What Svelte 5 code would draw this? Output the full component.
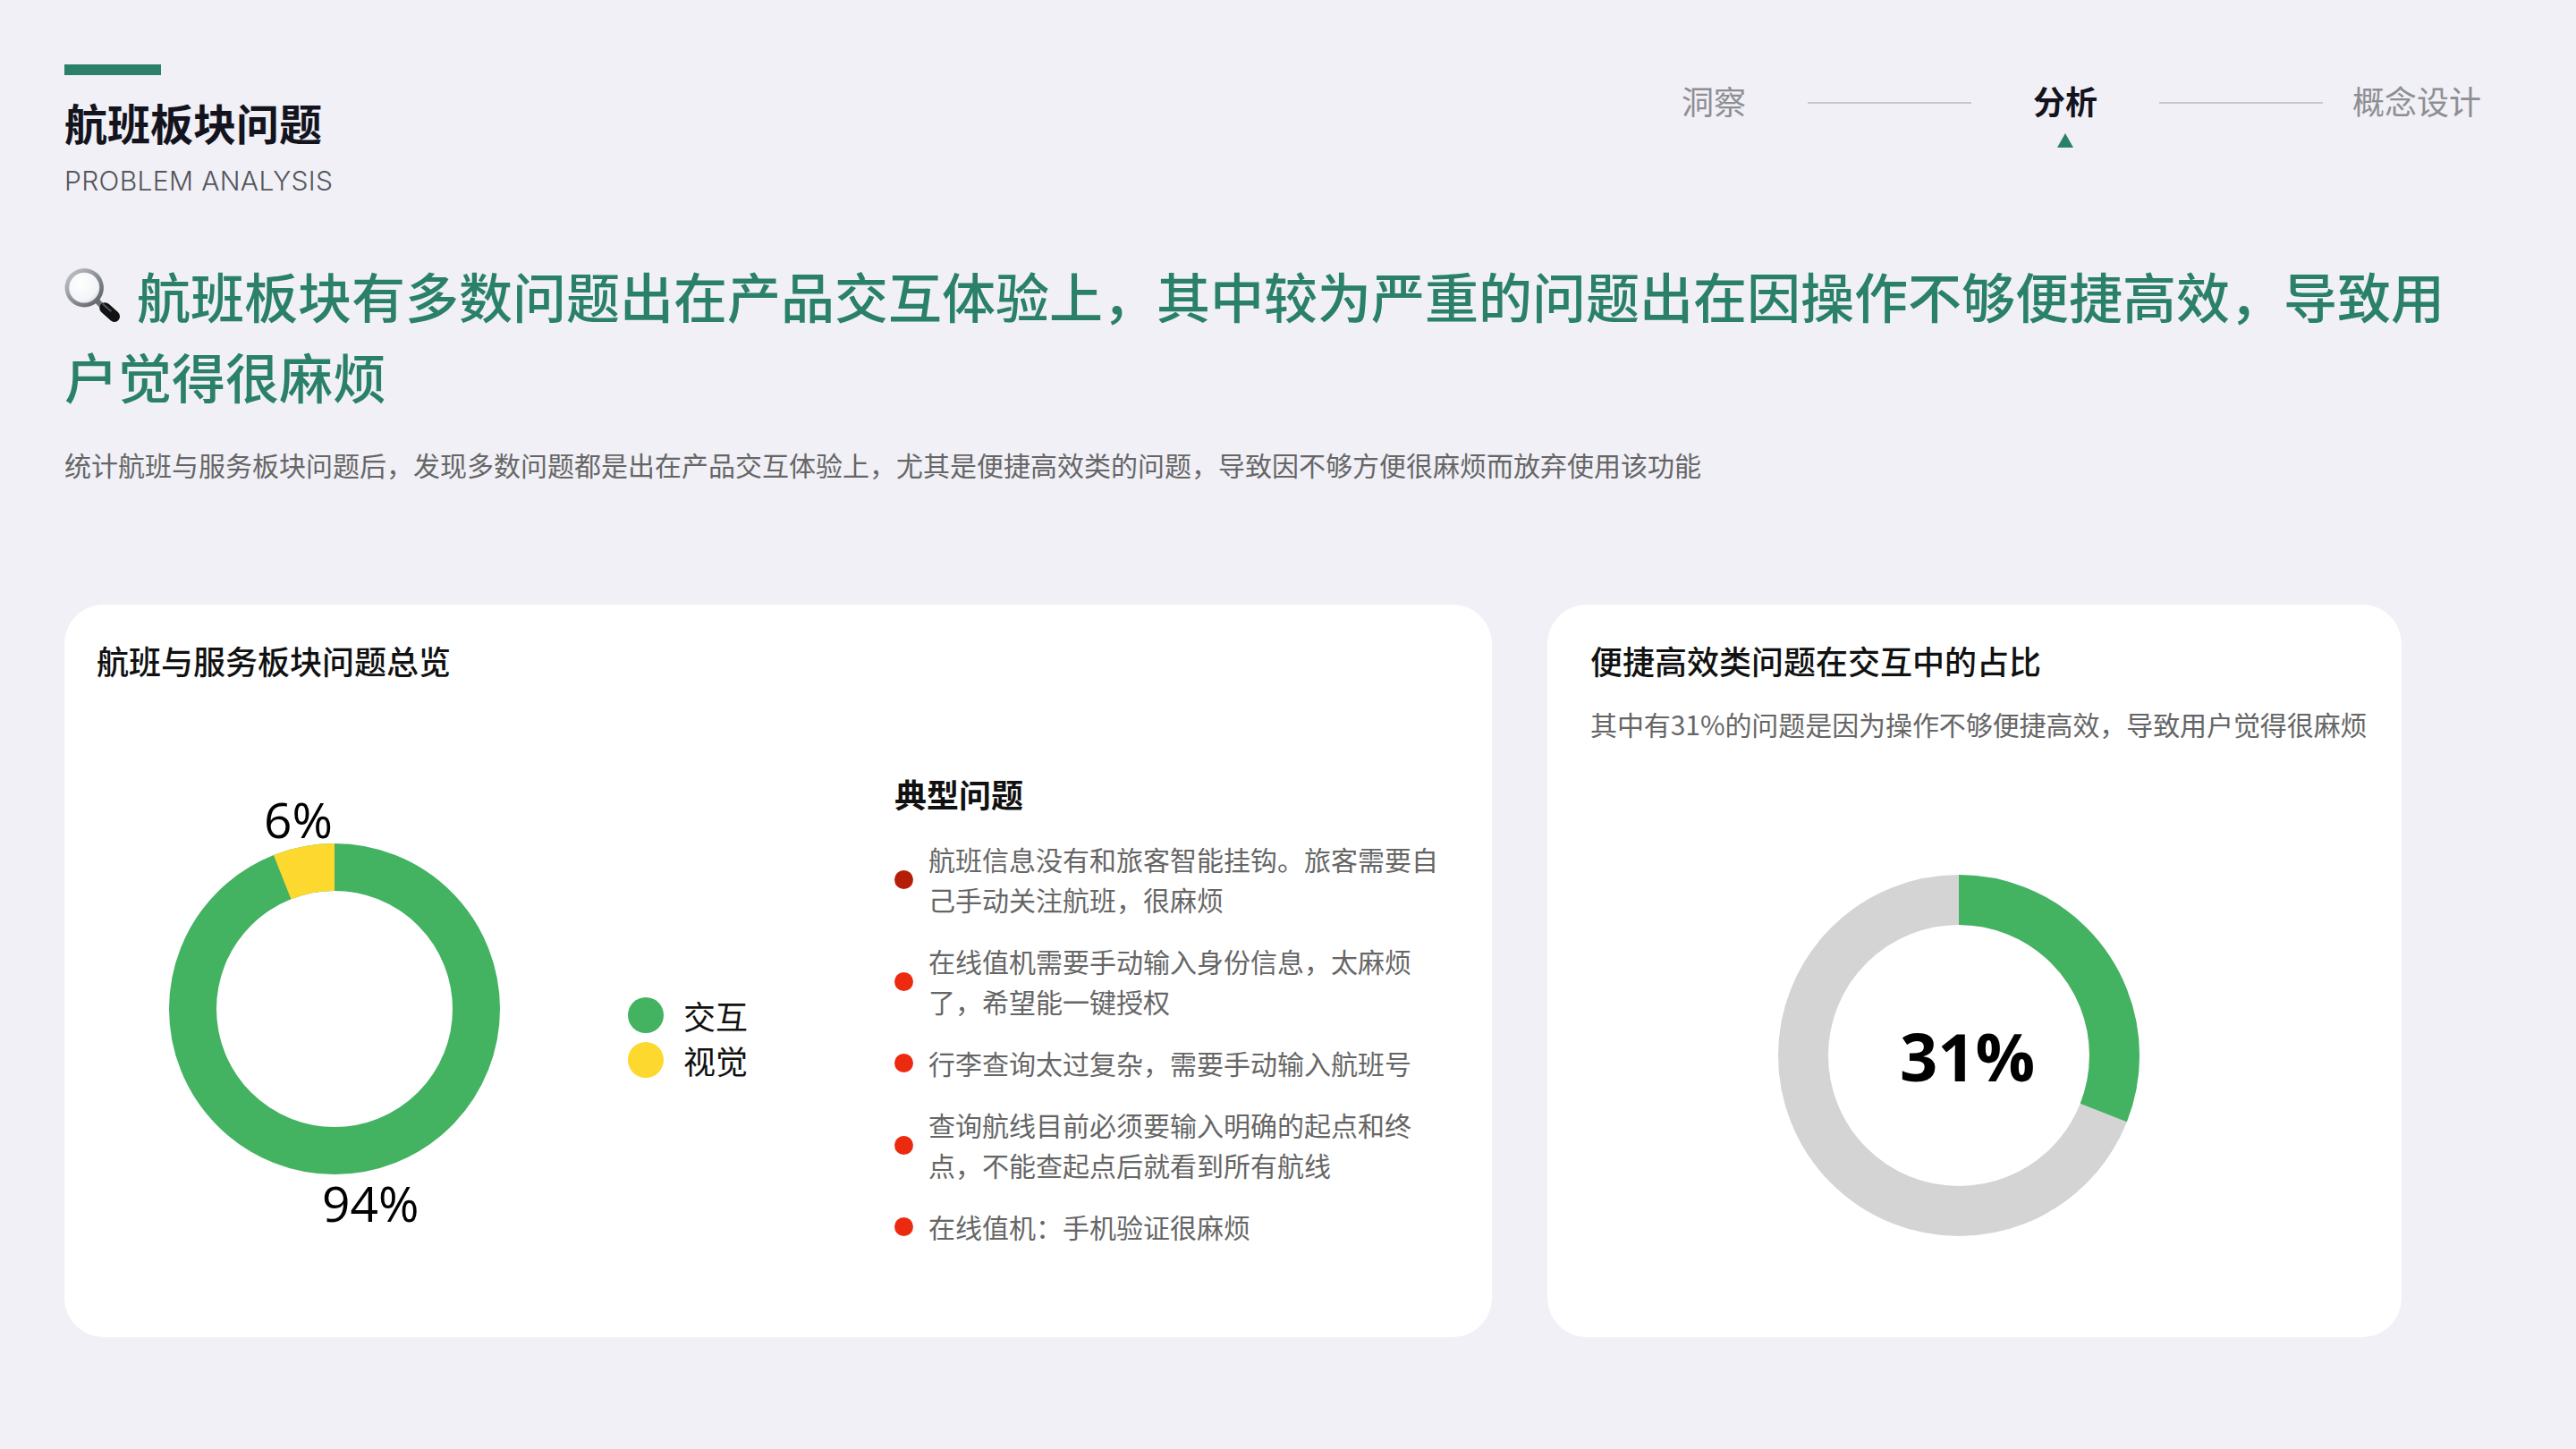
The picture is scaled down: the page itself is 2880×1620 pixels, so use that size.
<script>
  const steps = [
    { label: '洞察' },
    { label: '分析', active: true },
    { label: '概念设计' }
  ]

  const legend = [
    { label: '交互', color: '#43b261' },
    { label: '视觉', color: '#fdd82f' }
  ]

  const issues = [
    { text: '航班信息没有和旅客智能挂钩。旅客需要自己手动关注航班，很麻烦', color: '#b51f0a' },
    { text: '在线值机需要手动输入身份信息，太麻烦了，希望能一键授权', color: '#ec2a10' },
    { text: '行李查询太过复杂，需要手动输入航班号', color: '#ec2a10' },
    { text: '查询航线目前必须要输入明确的起点和终点，不能查起点后就看到所有航线', color: '#ec2a10' },
    { text: '在线值机：手机验证很麻烦', color: '#ec2a10' }
  ]
</script>

<div class="page">
  <header class="top">
    <div class="brand">
      <div class="bar"></div>
      <h1>航班板块问题</h1>
      <p class="en">PROBLEM ANALYSIS</p>
    </div>
    <nav class="steps">
      {#each steps as step, i}
        <span class="step" class:active={step.active}>{step.label}</span>
        {#if i < steps.length - 1}
          <span class="line" class:last={i === steps.length - 2}></span>
        {/if}
      {/each}
    </nav>
  </header>

  <h2 class="headline">
    <svg class="glass" viewBox="0 0 60 60" aria-hidden="true">
      <defs>
        <linearGradient id="rim" x1="0" y1="0" x2="1" y2="1">
          <stop offset="0" stop-color="#c9ced6" />
          <stop offset="0.5" stop-color="#8d9096" />
          <stop offset="1" stop-color="#55585c" />
        </linearGradient>
        <radialGradient id="lens" cx="0.4" cy="0.35" r="0.75">
          <stop offset="0" stop-color="#ffffff" />
          <stop offset="0.75" stop-color="#f2f4f8" />
          <stop offset="1" stop-color="#c6cfdc" />
        </radialGradient>
      </defs>
      <path d="M35 35 L41 41" stroke="#6b6d70" stroke-width="6" />
      <path d="M44 43 L54 52" stroke="#111214" stroke-width="12" stroke-linecap="round" />
      <path d="M42 39 L50 46" stroke="#55585c" stroke-width="2" stroke-linecap="round" />
      <circle cx="21.5" cy="21" r="21" fill="url(#rim)" />
      <circle cx="21.5" cy="21" r="16.5" fill="url(#lens)" />
    </svg>航班板块有多数问题出在产品交互体验上，其中较为严重的问题出在因操作不够便捷高效，导致用户觉得很麻烦
  </h2>
  <p class="summary">统计航班与服务板块问题后，发现多数问题都是出在产品交互体验上，尤其是便捷高效类的问题，导致因不够方便很麻烦而放弃使用该功能</p>

  <div class="cards">
    <section class="card overview">
      <h3>航班与服务板块问题总览</h3>
      <div class="overview-body">
        <div class="chart">
          <svg viewBox="0 0 370 370" width="370" height="370">
            <g transform="rotate(-90 185 185)" fill="none" stroke-width="53">
              <circle cx="185" cy="185" r="158.5" stroke="#43b261" />
              <circle cx="185" cy="185" r="158.5" stroke="#fdd82f" pathLength="100" stroke-dasharray="6 94" stroke-dashoffset="6" />
            </g>
          </svg>
          <span class="pct pct-small">6%</span>
          <span class="pct pct-large">94%</span>
        </div>
        <ul class="legend">
          {#each legend as item}
            <li><i style="background: {item.color}"></i>{item.label}</li>
          {/each}
        </ul>
        <div class="issues">
          <h4>典型问题</h4>
          <ul>
            {#each issues as issue}
              <li><i style="background: {issue.color}"></i><span>{issue.text}</span></li>
            {/each}
          </ul>
        </div>
      </div>
    </section>

    <section class="card share">
      <h3>便捷高效类问题在交互中的占比</h3>
      <p>其中有31%的问题是因为操作不够便捷高效，导致用户觉得很麻烦</p>
      <div class="ring">
        <svg viewBox="0 0 404 404" width="404" height="404">
          <g transform="rotate(-90 202 202)" fill="none" stroke-width="56">
            <circle cx="202" cy="202" r="174" stroke="#d4d4d4" />
            <circle cx="202" cy="202" r="174" stroke="#43b261" pathLength="100" stroke-dasharray="31 69" />
          </g>
        </svg>
        <span class="ring-value">31%</span>
      </div>
    </section>
  </div>
</div>

<style>
  :global(body) {
    margin: 0;
    background: #f0f0f6;
  }

  .page {
    width: 2880px;
    height: 1620px;
    box-sizing: border-box;
    padding: 72px 0 0 72px;
    background: #f0f0f6;
    font-family: "Noto Sans CJK SC", "Noto Sans", sans-serif;
    overflow: hidden;
  }

  .top {
    display: flex;
    justify-content: space-between;
    align-items: flex-start;
    padding-right: 106px;
  }

  .bar {
    width: 108px;
    height: 12px;
    background: #2a8068;
  }

  h1 {
    margin: 19px 0 0;
    font-size: 48px;
    line-height: 66px;
    font-weight: 700;
    color: #14141e;
  }

  .en {
    margin: 13px 0 0;
    font-family: Inter, "Liberation Sans", sans-serif;
    font-weight: 300;
    font-size: 30px;
    line-height: 40px;
    letter-spacing: 0.35px;
    color: #55555c;
  }

  .steps {
    display: flex;
    align-items: center;
    margin-top: 15px;
  }

  .step {
    position: relative;
    font-size: 36px;
    line-height: 50px;
    color: #8e8e93;
  }

  .step.active {
    color: #14141e;
    font-weight: 700;
  }

  .step.active::after {
    content: '';
    position: absolute;
    left: 50%;
    top: 62px;
    margin-left: -9px;
    border-left: 9px solid transparent;
    border-right: 9px solid transparent;
    border-bottom: 16px solid #2a8068;
  }

  .line {
    width: 183px;
    height: 2px;
    margin: 6px 69px 0;
    background: #c8c8cc;
  }

  .line.last {
    margin-right: 33px;
  }

  .headline {
    margin: 63px 0 0;
    width: 2700px;
    font-size: 60px;
    line-height: 90px;
    font-weight: 500;
    color: #2a8068;
  }

  .glass {
    width: 62px;
    height: 62px;
    margin-right: 19px;
    vertical-align: -6px;
  }

  .summary {
    margin: 32px 0 0;
    font-size: 30px;
    line-height: 44px;
    color: #666;
  }

  .cards {
    display: flex;
    gap: 62px;
    margin-top: 135px;
  }

  .card {
    box-sizing: border-box;
    height: 819px;
    padding-top: 37px;
    background: #fff;
    border-radius: 44px;
  }

  .card h3 {
    margin: 0;
    font-size: 36px;
    line-height: 50px;
    font-weight: 500;
    color: #111;
  }

  .overview {
    width: 1596px;
    padding-left: 36px;
  }

  .overview-body {
    display: flex;
    align-items: flex-start;
  }

  .chart {
    position: relative;
    width: 370px;
    height: 370px;
    margin: 180px 0 0 81px;
  }

  .chart svg,
  .ring svg {
    display: block;
  }

  .pct {
    position: absolute;
    font-family: "Open Sans", sans-serif;
    font-size: 55px;
    line-height: 70px;
    color: #000;
  }

  .pct-small {
    left: 106px;
    top: -62px;
  }

  .pct-large {
    left: 171px;
    top: 367px;
  }

  .legend {
    list-style: none;
    margin: 347px 0 0 143px;
    padding: 0;
    font-size: 36px;
    color: #111;
  }

  .legend li {
    display: flex;
    align-items: center;
    gap: 22px;
    height: 50px;
    line-height: 54px;
  }

  .legend i {
    width: 40px;
    height: 40px;
    border-radius: 50%;
  }

  .issues {
    width: 640px;
    margin: 99px 0 0 164px;
  }

  .issues h4 {
    margin: 0;
    font-size: 36px;
    line-height: 50px;
    font-weight: 700;
    color: #111;
  }

  .issues ul {
    display: flex;
    flex-direction: column;
    gap: 24px;
    list-style: none;
    margin: 26px 0 0;
    padding: 0;
  }

  .issues li {
    display: flex;
    align-items: center;
    gap: 17px;
    font-size: 30px;
    line-height: 45px;
    color: #666;
  }

  .issues i {
    flex: none;
    width: 21px;
    height: 21px;
    border-radius: 50%;
  }

  .issues span {
    width: 585px;
  }

  .share {
    width: 955px;
    padding-left: 48px;
  }

  .share p {
    margin: 24px 0 0;
    font-size: 30px;
    line-height: 44px;
    letter-spacing: -0.08px;
    color: #666;
    white-space: nowrap;
  }

  .ring {
    position: relative;
    width: 404px;
    height: 404px;
    margin: 147px 0 0 210px;
  }

  .ring-value {
    position: absolute;
    left: 136px;
    top: 148px;
    font-family: "Open Sans", sans-serif;
    font-size: 74px;
    line-height: 110px;
    font-weight: 700;
    color: #000;
  }
</style>
